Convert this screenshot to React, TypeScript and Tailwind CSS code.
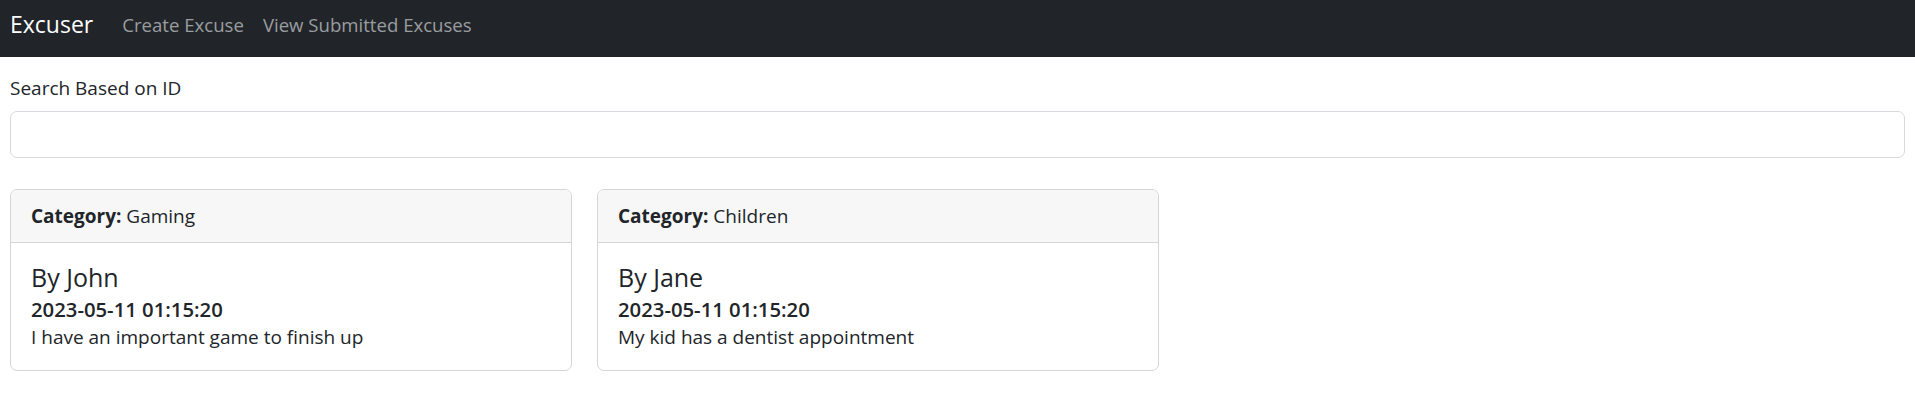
const excuses = [
  { id: 1, category: 'Gaming', name: 'John', date: '2023-05-11 01:15:20', text: 'I have an important game to finish up' },
  { id: 2, category: 'Children', name: 'Jane', date: '2023-05-11 01:15:20', text: 'My kid has a dentist appointment' },
]

export default function App() {
  return (
    <div className="min-h-screen bg-white text-[#212529] font-['Open_Sans',sans-serif] text-[19px]">
      {/* Navbar */}
      <nav className="h-[57px] bg-[#212529] flex items-center px-[10px] pb-[8px]">
        <span className="text-white text-[23px] mr-[29px]">Excuser</span>
        <div className="flex items-center gap-[19px] text-[18.6px] text-[#9a9da0]">
          <a>Create Excuse</a>
          <a>View Submitted Excuses</a>
        </div>
      </nav>

      <div className="px-[10px] pt-[17px]">
        <label className="block leading-[28px] mb-[9px]">Search Based on ID</label>
        <input
          type="text"
          className="block w-full h-[47px] border border-[#d6d9dd] rounded-[7px] px-3 outline-none"
        />
      </div>

      {/* Excuse cards */}
      <div className="flex gap-[25px] pl-[10px] mt-[31px]">
        {excuses.map(e => (
          <div key={e.id} className="w-[562px] h-[182px] border border-[#d5d5d5] rounded-[7px] overflow-hidden">
            <div className="h-[53px] bg-[#f7f7f7] border-b border-[#d5d5d5] px-[20px] flex items-center">
              <span className="font-bold">Category:</span>&nbsp;{e.category}
            </div>
            <div className="px-[20px] pt-[19px]">
              <h5 className="text-[25px] leading-[30px] mb-[5px]">By {e.name}</h5>
              <h6 className="text-[20.3px] font-semibold leading-[24px]">{e.date}</h6>
              <p className="leading-[28px] mt-[2px]">{e.text}</p>
            </div>
          </div>
        ))}
      </div>
    </div>
  )
}
